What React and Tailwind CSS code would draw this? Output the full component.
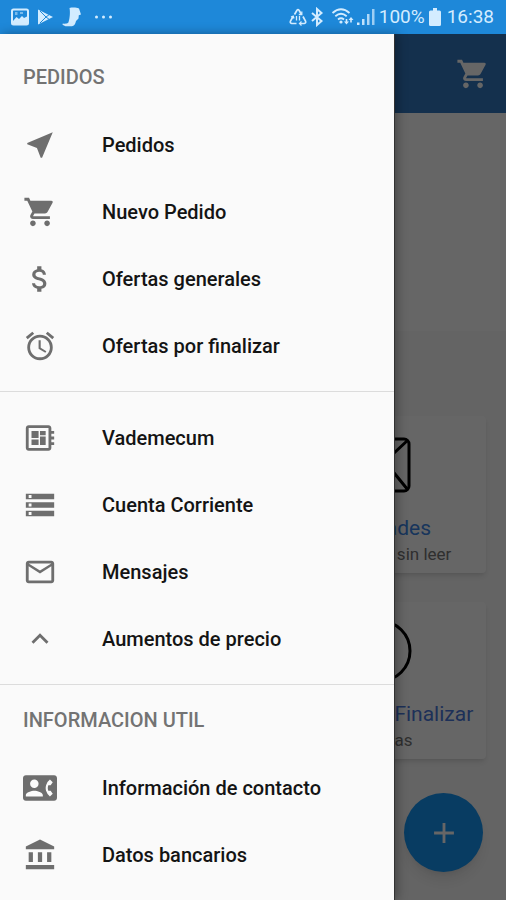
import {
  MdAccountBalance,
  MdAdd,
  MdAlarm,
  MdAttachMoney,
  MdContactPhone,
  MdDeveloperBoard,
  MdKeyboardArrowUp,
  MdMailOutline,
  MdNearMe,
  MdShoppingCart,
  MdStorage,
} from "react-icons/md";

const sections = [
  {
    title: "PEDIDOS",
    items: [
      { label: "Pedidos", icon: MdNearMe },
      { label: "Nuevo Pedido", icon: MdShoppingCart },
      { label: "Ofertas generales", icon: MdAttachMoney },
      { label: "Ofertas por finalizar", icon: MdAlarm },
    ],
  },
  {
    items: [
      { label: "Vademecum", icon: MdDeveloperBoard },
      { label: "Cuenta Corriente", icon: MdStorage },
      { label: "Mensajes", icon: MdMailOutline },
      { label: "Aumentos de precio", icon: MdKeyboardArrowUp },
    ],
  },
  {
    title: "INFORMACION UTIL",
    items: [
      { label: "Información de contacto", icon: MdContactPhone },
      { label: "Datos bancarios", icon: MdAccountBalance },
    ],
  },
];

export default function App() {
  return (
    <div className="min-h-screen flex flex-col overflow-hidden bg-[#fafafa] font-[Roboto,sans-serif]">
      <StatusBar />

      {/* Home screen and drawer share one grid cell */}
      <div className="flex-1 grid grid-cols-1">
        <Home />
        <div className="[grid-area:1/1] z-10 bg-black/60">
          <Drawer />
        </div>
      </div>
    </div>
  );
}

/* ================================
   Status bar
================================ */
function StatusBar() {
  return (
    <header className="h-[34px] shrink-0 flex items-center justify-between pl-[11px] pr-3 bg-[#1e88d9] text-[#d3ecff]">
      <div className="flex items-center gap-2">
        <svg className="w-[18px] h-[18px]" viewBox="0 0 18 18" fill="none">
          <rect x="1" y="1.5" width="16" height="15" rx="1.5" stroke="currentColor" strokeWidth="2" />
          <path d="M2 13l3.5-4 2.5 2 3-3 2 2 3-1.500V16H2z" fill="currentColor" />
          <path d="M4 4h2.500v3H4zM9 4h3v2H9z" fill="currentColor" opacity=".5" />
        </svg>
        <svg className="w-[17px] h-[18px]" viewBox="0 0 17 18" fill="none">
          <path d="M1 1.5l15 7.5-15 7.5z" fill="currentColor" />
          <path d="M3 3l6 6-6 6M9 9l4-3M9 9l4 3" stroke="#1e88d9" strokeWidth="1" />
        </svg>
        <svg className="w-5 h-5" viewBox="0 0 20 20" fill="currentColor">
          <path d="M7.5 1c3-.8 7-.6 9.5.5l2 6-2.2.8-.3 3.2-2.5 2.5c-.5 3-2 5-4 5.300H3.500L.5 17.700l.3-1.200c2.500.4 4.500.2 5.600-1C7.500 12.500 8.500 6 7.500 1z" />
        </svg>
        <svg className="w-5 h-[18px] ml-1" viewBox="0 0 20 18" fill="currentColor">
          <circle cx="2.5" cy="9" r="1.5" />
          <circle cx="9.5" cy="9" r="1.5" />
          <circle cx="16.5" cy="9" r="1.5" />
        </svg>
      </div>

      <div className="flex items-center text-[19px] leading-6">
        {/* Data saver */}
        <svg className="w-[18px] h-[18px]" viewBox="0 0 18 18" fill="none" stroke="currentColor" strokeWidth="1.7">
          <path d="M5.5 6.5L8 2.2q1-1.4 2 0l2.5 4.300M14 8.500l2.500 4.500q.8 2.200-1.200 2.500H11M7.500 15.500H2.700q-2-.5-1.200-2.500L4 8.500" />
          <path d="M12.8 3.5v3h-3M12.500 13.500l-2 2 2 2M2 9l2.200-.8.8 2.300M7.500 8v4.500M10.500 8v4.500" strokeWidth="1.3" />
        </svg>
        {/* Bluetooth */}
        <svg className="w-5 h-5" viewBox="0 0 20 20" fill="none" stroke="currentColor" strokeWidth="2">
          <path d="M5 6l9.500 8-4.500 4V2l4.500 4L5 14" />
        </svg>
        {/* Wi-Fi */}
        <svg className="w-6 h-5 ml-1" viewBox="0 0 24 20" fill="none" stroke="currentColor" strokeWidth="1.8">
          <path d="M1.5 6q8.500-7.500 17 0M4.300 9.300q5.700-5 11.400 0M7 12.500q3-2.500 6 0" />
          <circle cx="10" cy="15" r="1.6" fill="currentColor" stroke="none" />
          <path d="M15.5 17.500L13 14.500h1.700V12h1.600v2.500H18zM20 10l2.500 3h-1.700v2.500h-1.600V13h-1.700z" fill="currentColor" stroke="none" />
        </svg>
        <svg className="w-[18px] h-[18px] ml-0.5" viewBox="0 0 18 18" fill="currentColor">
          <rect x="0" y="14.5" width="2.5" height="2.5" />
          <rect x="5" y="11" width="2.5" height="6" opacity=".9" />
          <rect x="10" y="6" width="2.5" height="11" opacity=".8" />
          <rect x="15" y="1" width="2.5" height="16" opacity=".7" />
        </svg>
        <span className="ml-1">100%</span>
        <svg className="w-3 h-[18px] ml-1" viewBox="0 0 12 18" fill="currentColor">
          <path d="M4 0h4v2.5h2.5q1.5 0 1.5 1.5v12.5q0 1.5-1.5 1.5h-9Q0 18 0 16.5V4q0-1.5 1.5-1.5H4z" />
        </svg>
        <span className="ml-1.5">16:38</span>
      </div>
    </header>
  );
}

/* ================================
   Drawer
================================ */
function Drawer() {
  return (
    <nav className="w-[78%] h-full pt-2 bg-[#fafafa] border-r border-black/80 shadow-[2px_0_10px_rgba(0,0,0,0.35)]">
      {sections.map((section, i) => (
        <section
          key={i}
          className={i > 0 ? "border-t border-[#dcdcdc]" : ""}
        >
          {section.title ? (
            <h2 className="h-[69px] flex items-center pl-[23px] text-[20px] leading-6 font-medium text-[#737373]">
              {section.title}
            </h2>
          ) : (
            <div className="h-3" />
          )}

          <ul className={i < sections.length - 1 ? "pb-3" : ""}>
            {section.items.map((item) => (
              <DrawerItem key={item.label} {...item} />
            ))}
          </ul>
        </section>
      ))}
    </nav>
  );
}

function DrawerItem({ label, icon: Icon }) {
  return (
    <li>
      <a
        href="#"
        className="h-[67px] flex items-center gap-[45px] pl-[23px] text-[20px] leading-6 font-medium text-[#141414]"
      >
        <Icon className="w-[34px] h-[34px] shrink-0 text-[#6e6e6e]" />
        {label}
      </a>
    </li>
  );
}

/* ================================
   Home
================================ */
function Home() {
  return (
    <main className="[grid-area:1/1] relative flex flex-col">
      {/* Toolbar */}
      <div className="h-[79px] flex items-center justify-end pr-4 bg-[#3478c0] shadow-md">
        <button aria-label="Carrito" className="text-white">
          <MdShoppingCart className="w-[34px] h-[34px]" />
        </button>
      </div>

      {/* Banner */}
      <div className="h-[218px] bg-white" />

      {/* Cards */}
      <div className="flex flex-col items-end gap-[29px] pt-[85px] pr-5">
        <Card title="Novedades" detail="2 mensajes sin leer" color="text-[#3c86e6]">
          <rect x="3" y="3" width="60" height="52" rx="5" />
          <path d="M4 4l29 27L62 4M4 54l22-28M62 54L40 27" />
        </Card>
        <Card title="Ofertas por Finalizar" detail="0 ofertas" color="text-[#4a78dc]">
          <circle cx="34" cy="29" r="30" />
          <path d="M34 11v18l10 8" />
        </Card>
      </div>

      <button
        aria-label="Agregar"
        className="absolute right-[23px] bottom-7 w-[79px] h-[79px] rounded-full flex items-center justify-center bg-[#1496f5] text-white shadow-lg"
      >
        <MdAdd className="w-[34px] h-[34px]" />
      </button>
    </main>
  );
}

function Card({ title, detail, color, children }) {
  return (
    <a
      href="#"
      className="w-[215px] h-[157px] flex flex-col items-center pt-5 rounded-sm bg-white shadow-md whitespace-nowrap"
    >
      <svg className="w-[66px] h-[60px] overflow-visible" viewBox="0 0 66 60" fill="none" stroke="#000" strokeWidth="3">
        {children}
      </svg>
      <span className={`mt-5 text-[21px] leading-6 ${color}`}>{title}</span>
      <span className="text-[17px] leading-7 text-[#757575]">{detail}</span>
    </a>
  );
}
